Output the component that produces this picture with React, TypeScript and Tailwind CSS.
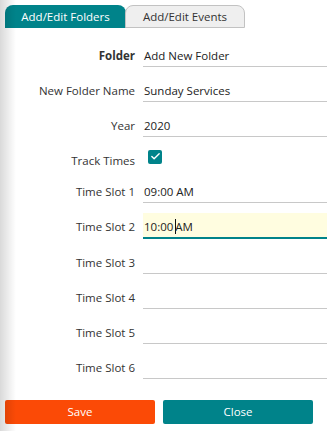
import { Check } from "lucide-react";
import { clsx } from "clsx";

const font = { fontFamily: '"Open Sans", "Noto Sans", sans-serif' };

type Row = { label: string; value?: string; bold?: boolean; focused?: boolean };

const rowsTop: Row[] = [
  { label: "Folder", value: "Add New Folder", bold: true },
  { label: "New Folder Name", value: "Sunday Services" },
  { label: "Year", value: "2020" },
];

const slots: Row[] = [
  { label: "Time Slot 1", value: "09:00 AM" },
  { label: "Time Slot 2", value: "10:00 AM", focused: true },
  { label: "Time Slot 3" },
  { label: "Time Slot 4" },
  { label: "Time Slot 5" },
  { label: "Time Slot 6" },
];

function FieldRow({ row }: { row: Row }) {
  return (
    <div className="flex items-start gap-2">
      <div
        className={clsx(
          "w-[135px] shrink-0 pt-[6px] text-right text-[11.5px] leading-[16px] text-[#333]",
          row.bold && "font-bold"
        )}
      >
        {row.label}
      </div>
      <div
        className={clsx(
          "flex h-[25px] flex-1 items-center pl-[1px] pt-[3px] text-[11.5px] text-[#222]",
          row.focused ? "h-[26px] border-b-2 border-[#00838a] bg-[#fffde0]" : "border-b border-[#c8c8c8]"
        )}
      >
        {row.focused ? (
          <>
            <span className="whitespace-pre">10:00 </span>
            <span className="mx-[-1px] h-[15px] w-px bg-[#111]" />
            <span>AM</span>
          </>
        ) : (
          row.value
        )}
      </div>
    </div>
  );
}

export default function App() {
  return (
    <div className="relative h-[431px] w-[327px] overflow-hidden bg-white" style={font}>
      <div className="flex pl-[5px] pt-[5px]">
        <div className="flex h-[23px] w-[121px] items-center justify-center rounded-t-[8px] bg-[#00838a] text-[11.5px] text-white">
          Add/Edit Folders
        </div>
        <div className="-ml-px flex h-[23px] w-[120px] items-center justify-center rounded-t-[8px] border border-[#c2c2c2] bg-[#efefef] text-[11.5px] text-[#333]">
          Add/Edit Events
        </div>
      </div>

      <div className="mt-[14px] flex flex-col gap-[10px]">
        {rowsTop.map((r) => (
          <FieldRow key={r.label} row={r} />
        ))}
        <div className="flex h-[21px] items-center gap-2">
          <div className="w-[135px] shrink-0 pt-[7px] text-right text-[11.5px] text-[#333]">Track Times</div>
          <div className="mb-[2px] ml-[5px] flex h-[14px] w-[14px] items-center justify-center rounded-[2px] bg-[#00838a]">
            <Check className="h-[11px] w-[11px] text-white" strokeWidth={3} />
          </div>
        </div>
        {slots.map((r) => (
          <FieldRow key={r.label} row={r} />
        ))}
      </div>

      <div className="mt-[21px] flex gap-2 pl-[5px]">
        <button className="h-[24px] w-[150px] rounded-[2px] bg-[#fb4a06] text-[11.5px] text-white">Save</button>
        <button className="h-[24px] w-[150px] rounded-[2px] bg-[#00838a] text-[11.5px] text-white">Close</button>
      </div>

      <div className="pointer-events-none absolute inset-y-0 left-0 w-[16px] bg-gradient-to-r from-[#00000026] to-transparent" />
    </div>
  );
}
